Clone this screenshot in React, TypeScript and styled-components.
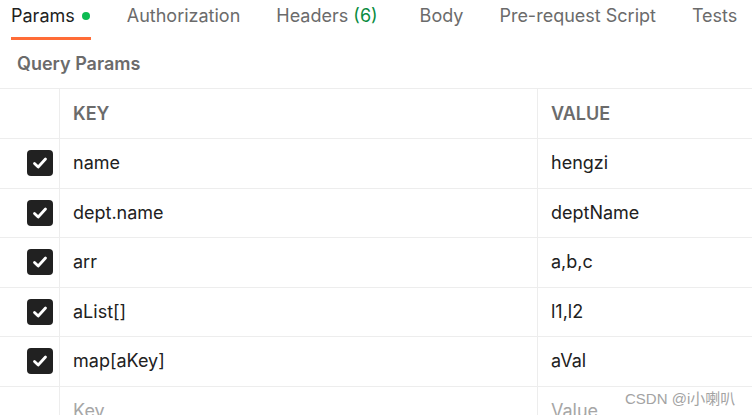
import React from "react";
import styled, { createGlobalStyle } from "styled-components";

const Global = createGlobalStyle`
  html, body { margin: 0; padding: 0; background: #ffffff; }
  body { font-family: Inter, "Noto Sans", sans-serif; overflow: hidden; }
  * { box-sizing: border-box; }
`;

const Page = styled.div`
  position: relative;
  width: 752px;
  height: 415px;
  overflow: hidden;
  background: #fff;
`;

const TabBar = styled.div`
  display: flex;
  gap: 36px;
  padding-left: 11px;
  height: 40px;
`;

const Tab = styled.div<{ $active?: boolean; $extra?: number }>`
  display: flex;
  align-items: center;
  height: 40px;
  padding-bottom: 7px;
  margin-left: ${(p) => p.$extra ?? 0}px;
  font-size: 18px;
  white-space: nowrap;
  color: ${(p) => (p.$active ? "#212121" : "#6b6b6b")};
  border-bottom: 3px solid ${(p) => (p.$active ? "#ff6c37" : "transparent")};
`;

const Dot = styled.span`
  width: 8px;
  height: 8px;
  border-radius: 50%;
  background: #0cbb52;
  margin: 1px 1px 0 7px;
`;

const Count = styled.span`
  color: #0a8c3f;
`;

const SectionTitle = styled.div`
  height: 48px;
  display: flex;
  align-items: center;
  padding-left: 17px;
  padding-bottom: 2px;
  font-size: 18px;
  font-weight: 600;
  color: #6b6b6b;
`;

const Table = styled.div`
  width: 900px;
  border-top: 1px solid #ededed;
`;

const Row = styled.div<{ $h: number }>`
  display: grid;
  grid-template-columns: 60px 478px 1fr;
  height: ${(p) => p.$h}px;
  border-bottom: 1px solid #ededed;
`;

const CheckCell = styled.div`
  display: flex;
  align-items: center;
  justify-content: flex-end;
  padding-right: 6px;
  border-right: 1px solid #ededed;
`;

const Cell = styled.div<{ $head?: boolean; $placeholder?: boolean; $border?: boolean }>`
  display: flex;
  align-items: center;
  padding-left: 13px;
  padding-bottom: 1px;
  font-size: 18px;
  font-weight: ${(p) => (p.$head ? 600 : 400)};
  color: ${(p) => (p.$head ? "#6b6b6b" : p.$placeholder ? "#a6a6a6" : "#212121")};
  border-right: ${(p) => (p.$border ? "1px solid #ededed" : "none")};
  white-space: nowrap;
`;

const Box = styled.div`
  width: 26px;
  height: 26px;
  border-radius: 4px;
  background: #212121;
  display: flex;
  align-items: center;
  justify-content: center;
`;

const Watermark = styled.div`
  position: absolute;
  left: 625px;
  top: 387px;
  font-family: "Liberation Sans", "Noto Sans CJK SC", sans-serif;
  font-size: 15px;
  color: #a3a3a3;
  white-space: nowrap;
`;

const Check = () => (
  <Box>
    <svg width="18" height="18" viewBox="0 0 18 18">
      <path d="M3.5 9.5 L7.2 13 L14.5 5" fill="none" stroke="#fff" strokeWidth="2.8" strokeLinecap="round" strokeLinejoin="round" />
    </svg>
  </Box>
);

const rows = [
  ["name", "hengzi"],
  ["dept.name", "deptName"],
  ["arr", "a,b,c"],
  ["aList[]", "l1,l2"],
  ["map[aKey]", "aVal"],
];

export default function App() {
  return (
    <Page>
      <Global />
      <TabBar>
        <Tab $active>
          Params
          <Dot />
        </Tab>
        <Tab>Authorization</Tab>
        <Tab>
          Headers&nbsp;<Count>(6)</Count>
        </Tab>
        <Tab $extra={6}>Body</Tab>
        <Tab>Pre-request Script</Tab>
        <Tab>Tests</Tab>
      </TabBar>
      <SectionTitle>Query Params</SectionTitle>
      <Table>
        <Row $h={50}>
          <CheckCell />
          <Cell $head $border>KEY</Cell>
          <Cell $head>VALUE</Cell>
        </Row>
        {rows.map(([k, v]) => (
          <Row $h={49.5} key={k}>
            <CheckCell>
              <Check />
            </CheckCell>
            <Cell $border>{k}</Cell>
            <Cell>{v}</Cell>
          </Row>
        ))}
        <Row $h={49.5}>
          <CheckCell />
          <Cell $border $placeholder>Key</Cell>
          <Cell $placeholder>Value</Cell>
        </Row>
      </Table>
      <Watermark>CSDN @i小喇叭</Watermark>
    </Page>
  );
}
